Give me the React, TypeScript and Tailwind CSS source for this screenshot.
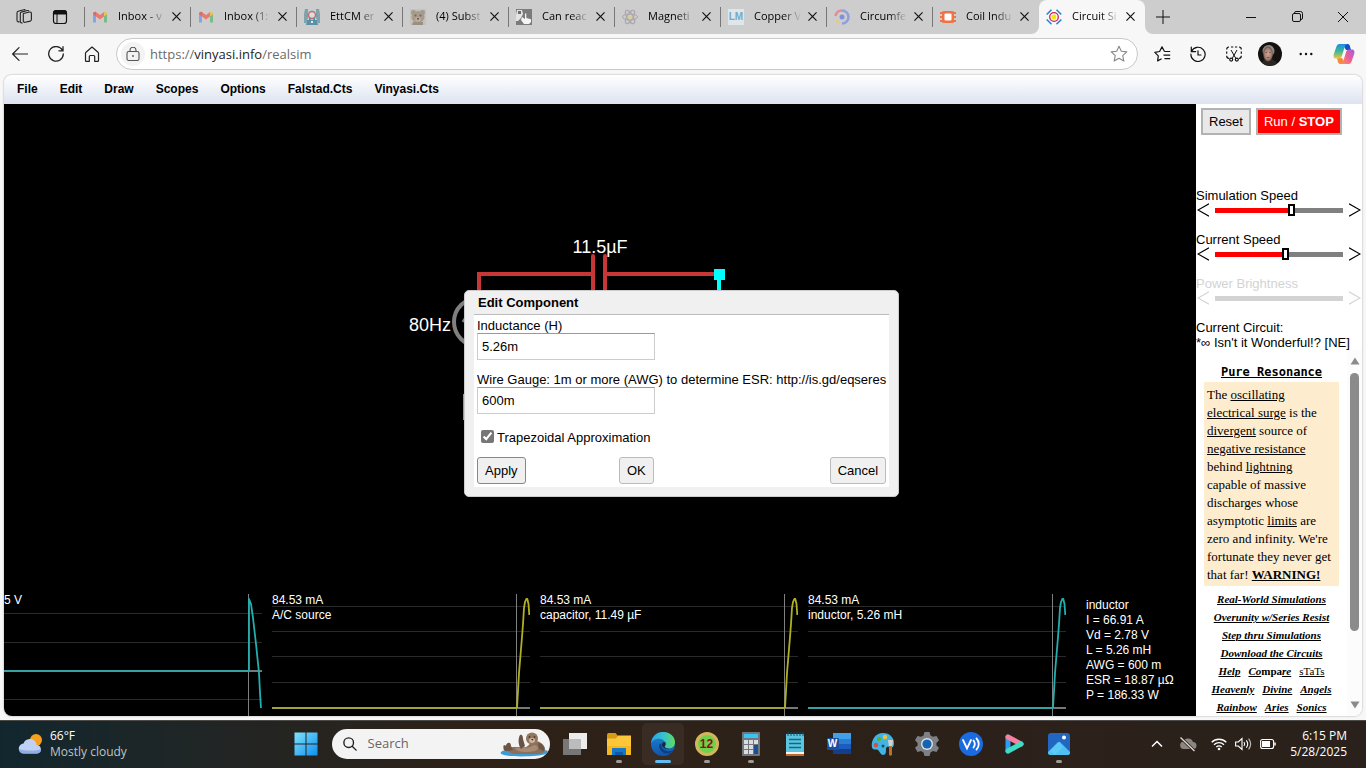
import { useState } from "react";
import type { ReactNode } from "react";
import clsx from "clsx";

/* ---------- favicons ---------- */

function Gmail() {
  return (
    <svg viewBox="0 0 16 16" className="size-4 opacity-60">
      <path d="M1 4.500V13.500h3V7z" fill="#4f8ff0" />
      <path d="M12 7v6.500h3v-9z" fill="#43b05c" />
      <path d="M1 5c0-2 1.800-2.800 3-1.900V7.600L1 5.300z" fill="#c8372e" />
      <path d="M4 3.100l4 3 4-3v4.500l-4 3-4-3z" fill="#ff4334" />
      <path d="M12 3.100c1.400-1 3 0 3 1.900v.3l-3 2.300z" fill="#fbbc04" />
    </svg>
  );
}

function Ett() {
  return (
    <svg viewBox="0 0 16 16" className="size-4">
      <path d="M0 0h16v16H0z" fill="#c3cfd2" />
      <path d="M1 0h3v9L2 14H0V5zM15 0h-3v9l2 5h2V5z" fill="#7fa3ad" />
      <path d="M3 11h10l1 5H2z" fill="#5e8fa2" />
      <circle cx="8" cy="6" r="3.500" fill="#d9dfe0" stroke="#c66b70" strokeWidth="1.500" />
      <path d="M5 8l3 4 3-4v6H5z" fill="#4f93ad" />
      <path d="M7 12h2v2H7z" fill="#e8edee" />
    </svg>
  );
}

function Bear() {
  return (
    <svg viewBox="0 0 16 16" className="size-4">
      <path d="M0 0h16v16H0z" fill="#c3c2bd" />
      <circle cx="3.500" cy="3.500" r="2.500" fill="#a39a8d" />
      <circle cx="12.500" cy="3.500" r="2.500" fill="#a39a8d" />
      <ellipse cx="8" cy="8" rx="6.500" ry="6" fill="#a79b8b" />
      <ellipse cx="8" cy="10.500" rx="3" ry="2.500" fill="#b9ad9e" />
      <path d="M3 13h10v3H2z" fill="#99907f" />
      <circle cx="5.500" cy="6.500" r="1" fill="#71675b" />
      <circle cx="10.500" cy="6.500" r="1" fill="#71675b" />
      <path d="M7 9h2v1.500H7z" fill="#665c52" />
    </svg>
  );
}

function HandPhoto() {
  return (
    <svg viewBox="0 0 16 16" className="size-4">
      <path d="M0 0h16v16H0z" fill="#7b7b7b" />
      <path d="M1 1l5 0 1 4-2 4-3 3H0V6z" fill="#e4e4e4" />
      <path d="M2 2h3v3H2z" fill="#6c6c6c" />
      <path d="M6 8l3 2V4.500h1.300V9l4.700 1.200V13l-2 2H8L5 11z" fill="#f5f5f5" />
    </svg>
  );
}

function Atom() {
  return (
    <svg viewBox="0 0 16 16" className="size-4" fill="none" stroke="#aaa4ad" strokeWidth="1">
      <ellipse cx="8" cy="8" rx="7.500" ry="3" />
      <ellipse cx="8" cy="8" rx="7.500" ry="3" transform="rotate(60 8 8)" />
      <ellipse cx="8" cy="8" rx="7.500" ry="3" transform="rotate(120 8 8)" />
      <circle cx="8" cy="8" r="2" fill="#d9cf8f" stroke="none" />
    </svg>
  );
}

function Lm() {
  return (
    <span className="flex size-4 items-center justify-center bg-[#dfe6ea] font-['Liberation_Sans'] text-[10px] font-bold text-[#76a9c8]">
      LM
    </span>
  );
}

function Rings() {
  return (
    <svg viewBox="0 0 16 16" className="size-4" fill="none" strokeWidth="2.600">
      <path d="M1.500 7A6.500 6.500 0 0 1 8 1.500" stroke="#e38b95" />
      <path d="M8 1.500a6.500 6.500 0 0 1 0 13" stroke="#8f9fe0" />
      <path d="M6 14.200a6.500 6.500 0 0 1-3.800-3.200" stroke="#e3cf7c" />
      <circle cx="8" cy="8" r="2.500" fill="#7f90de" stroke="none" />
    </svg>
  );
}

function Chip() {
  return (
    <svg viewBox="0 0 16 16" className="size-4">
      <path d="M0 3h3v2H0zM0 7h3v2H0zM0 11h3v2H0zM13 3h3v2h-3zM13 7h3v2h-3zM13 11h3v2h-3z" fill="#ef7443" />
      <rect x="2" y="2" width="12" height="12" rx="1.500" fill="#ef7443" />
      <rect x="4.500" y="4.500" width="7" height="7" rx="1" fill="#fff" />
    </svg>
  );
}

function Target() {
  return (
    <svg viewBox="0 0 16 16" className="size-4" fill="none">
      <circle cx="8" cy="8" r="4.300" stroke="#d6204e" strokeWidth="1.300" />
      <circle cx="8" cy="8" r="2.400" fill="#f3e600" />
      <path
        d="M5.500.7L.7 5.500M10.500.7l4.800 4.800M5.500 15.300L.7 10.500M10.500 15.300l4.800-4.800"
        stroke="#2a7fd0"
        strokeWidth="1.500"
      />
    </svg>
  );
}

interface TabInfo {
  title: string;
  icon: ReactNode;
}

const TABS: TabInfo[] = [
  { title: "Inbox - v", icon: <Gmail /> },
  { title: "Inbox (1:", icon: <Gmail /> },
  { title: "EttCM er", icon: <Ett /> },
  { title: "(4) Subst", icon: <Bear /> },
  { title: "Can reac", icon: <HandPhoto /> },
  { title: "Magneti", icon: <Atom /> },
  { title: "Copper V", icon: <Lm /> },
  { title: "Circumfe", icon: <Rings /> },
  { title: "Coil Indu", icon: <Chip /> },
  { title: "Circuit Si", icon: <Target /> },
];

function Cross() {
  return (
    <svg viewBox="0 0 10 10" className="size-[9px]" stroke="#111" strokeWidth="1.300">
      <path d="M.5.5l9 9M9.500.5l-9 9" />
    </svg>
  );
}

function Tab({ tab, active }: { tab: TabInfo; active: boolean }) {
  return (
    <div
      className={clsx(
        "relative flex h-full w-[106px] shrink-0 items-center pr-1 pb-px pl-[7px]",
        active && "rounded-t-lg bg-[#f7f7f7]",
      )}
    >
      {!active && <span className="absolute top-[7px] -left-px h-5 w-px bg-[#777]" />}
      {active && (
        <>
          <svg viewBox="0 0 8 8" className="absolute bottom-0 -left-2 size-2">
            <path d="M8 0v8H0a8 8 0 0 0 8-8z" fill="#f7f7f7" />
          </svg>
          <svg viewBox="0 0 8 8" className="absolute -right-2 bottom-0 size-2">
            <path d="M0 0v8h8a8 8 0 0 1-8-8z" fill="#f7f7f7" />
          </svg>
        </>
      )}
      {tab.icon}
      <span className="ml-[10px] w-12 text-[11px] whitespace-nowrap text-black [mask-image:linear-gradient(to_right,black_60%,transparent_98%)]">
        {tab.title}
      </span>
      <button aria-label="Close tab" className="ml-[2px] flex size-4 items-center justify-center">
        <Cross />
      </button>
    </div>
  );
}

function TabStrip() {
  return (
    <header className="flex h-[34px] shrink-0 items-center bg-[#cdcdcd] pb-px">
      <button aria-label="Workspaces" className="ml-[6px] flex w-9 justify-center">
        <svg viewBox="0 0 18 18" className="size-[18px]" fill="none" stroke="#222" strokeWidth="1.100">
          <path d="M8.500 5.500l6-1.500a1.500 1.500 0 0 1 1.900 1.400v6.200a1.500 1.500 0 0 1-1.200 1.500l-5 1.200a1.500 1.500 0 0 1-1.900-1.400V6.500a1 1 0 0 1 .2-1z" />
          <path d="M7.500 14.700a1.500 1.500 0 0 1-2.200-1.200V5.500c0-.7.400-1.200 1-1.400l6-1.600a1.500 1.500 0 0 1 1.700.8" />
          <path d="M4.500 13.500a1.500 1.500 0 0 1-2.500-1.100V5c0-.8.500-1.500 1.200-1.700l5.500-1.600a1.500 1.500 0 0 1 1.700.6" />
        </svg>
      </button>
      <button aria-label="Tab actions" className="mr-[7px] flex w-9 justify-center">
        <svg viewBox="0 0 16 16" className="size-4" fill="none" stroke="#111">
          <rect x="1.500" y="1.500" width="13" height="13" rx="2.500" strokeWidth="1.200" />
          <path d="M1.500 5V4a2.500 2.500 0 0 1 2.500-2.500h8A2.500 2.500 0 0 1 14.500 4v1z" fill="#111" />
          <path d="M5 5v9.500" />
        </svg>
      </button>
      <nav className="-mb-px flex h-[34px]" aria-label="Tabs">
        {TABS.map((tab, i) => (
          <Tab key={tab.title} tab={tab} active={i === TABS.length - 1} />
        ))}
      </nav>
      <button aria-label="New tab" className="ml-[10px] flex size-4 items-center justify-center">
        <svg viewBox="0 0 14 14" className="size-[14px]" stroke="#111">
          <path d="M7 0v14M0 7h14" />
        </svg>
      </button>
      <div className="ml-auto flex">
        <button aria-label="Minimize" className="flex w-[46px] items-center justify-center">
          <svg viewBox="0 0 10 10" className="size-[10px]" stroke="#111">
            <path d="M0 5.500h10" />
          </svg>
        </button>
        <button aria-label="Restore" className="flex w-[46px] items-center justify-center">
          <svg viewBox="0 0 11 11" className="size-[11px]" fill="none" stroke="#111">
            <rect x=".5" y="2.500" width="8" height="8" rx="1.500" />
            <path d="M2.500 2.500V2A1.500 1.500 0 0 1 4 .5h4.500a2 2 0 0 1 2 2V7A1.500 1.500 0 0 1 9 8.500h-.5" />
          </svg>
        </button>
        <button aria-label="Close" className="flex w-[46px] items-center justify-center">
          <svg viewBox="0 0 10 10" className="size-[10px]" stroke="#111">
            <path d="M0 0l10 10M10 0L0 10" />
          </svg>
        </button>
      </div>
    </header>
  );
}

/* ---------- address bar ---------- */

function ToolButton({ label, children }: { label: string; children: ReactNode }) {
  return (
    <button aria-label={label} className="flex h-8 w-9 shrink-0 items-center justify-center">
      {children}
    </button>
  );
}

function Toolbar() {
  return (
    <div className="flex h-[41px] shrink-0 items-center bg-[#f7f7f7] pr-1 pb-px pl-[2px]">
      <ToolButton label="Back">
        <svg viewBox="0 0 16 14" className="h-[14px] w-4" fill="none" stroke="#222" strokeWidth="1.200" strokeLinecap="round">
          <path d="M15.500 7H.8M7 .7L.7 7 7 13.300" />
        </svg>
      </ToolButton>
      <ToolButton label="Refresh">
        <svg viewBox="0 0 16 16" className="size-4" fill="none" stroke="#222" strokeWidth="1.300" strokeLinecap="round">
          <path d="M14.500 4.500A7.300 7.300 0 1 0 15.300 8M15 .7v4.100h-4.100" />
        </svg>
      </ToolButton>
      <ToolButton label="Home">
        <svg viewBox="0 0 16 16" className="size-4" fill="none" stroke="#222" strokeWidth="1.200" strokeLinejoin="round">
          <path d="M8 1l6 5.200c.4.300.5.700.5 1.100v7.200c0 .6-.3.900-.8.900h-3V10.500c0-.7-.4-1-1-1H6.300c-.6 0-1 .3-1 1v4.900h-3c-.5 0-.8-.3-.8-.9V7.300c0-.4.1-.8.500-1.100z" />
        </svg>
      </ToolButton>
      <div className="mx-[6px] flex h-8 min-w-0 flex-1 items-center rounded-full border border-[#c9c9c9] bg-white pr-[9px] pl-1">
        <button aria-label="Site information" className="flex size-6 items-center justify-center rounded-full bg-[#f3f3f3]">
          <svg viewBox="0 0 14 14" className="size-[14px]" fill="none" stroke="#555" strokeWidth="1.100">
            <rect x="1" y="4.500" width="12" height="9" rx="1.800" />
            <path d="M4 4.500V3.300a3 3 0 0 1 6 0v1.200" />
            <circle cx="7" cy="9" r=".9" fill="#555" stroke="none" />
          </svg>
        </button>
        <span className="ml-[5px] flex-1 pt-px text-[13px] text-[#6b6b6b]">
          https://<span className="text-[#222]">vinyasi.info</span>/realsim
        </span>
        <button aria-label="Add to favorites">
          <svg viewBox="0 0 18 18" className="size-[18px]" fill="none" stroke="#888" strokeWidth="1.100" strokeLinejoin="round">
            <path d="M9 1.300l2.300 5 5.500.6-4.100 3.700 1.200 5.500L9 13.300l-4.900 2.800 1.200-5.500L1.200 6.900l5.500-.6z" />
          </svg>
        </button>
      </div>
      <ToolButton label="Favorites">
        <svg viewBox="0 0 17 16" className="h-4 w-[17px]" fill="none" stroke="#111" strokeWidth="1.200" strokeLinejoin="round">
          <path d="M10.500 5.500L8 .9 5.600 5.500l-4.800.9 3.500 3.500-.7 5 4-2.100M10.500 5.500h5.700M9.500 9.200h6.700M10.500 12.700h5.700" />
        </svg>
      </ToolButton>
      <ToolButton label="History">
        <svg viewBox="0 0 16 16" className="size-4" fill="none" stroke="#111" strokeWidth="1.200" strokeLinecap="round">
          <path d="M1.500 5.500A7.100 7.100 0 1 1 .9 8M1.300 1.200v4.400h4.400M8 4.800V9h3" />
        </svg>
      </ToolButton>
      <ToolButton label="Screenshot">
        <svg viewBox="0 0 16 16" className="size-4" fill="none" stroke="#111" strokeWidth="1.200">
          <path d="M.7 3.500c0-1.500.8-2.500 2.300-2.500M5 1h2.300M9 1h2.200M13 1c1.500 0 2.300 1 2.300 2.500M.7 5.500v2.300M15.300 5.500v2.300M.7 9.700c0 1.800.8 2.600 2.300 2.600M15.300 9.700c0 1.800-.8 2.600-2.300 2.600" />
          <path d="M5 4l4.700 8.200M11 4L6.300 12.200" strokeWidth="1" />
          <circle cx="5.200" cy="13.600" r="1.500" />
          <circle cx="10.800" cy="13.600" r="1.500" />
        </svg>
      </ToolButton>
      <ToolButton label="Profile">
        <svg viewBox="0 0 24 24" className="size-6">
          <defs>
            <radialGradient id="face">
              <stop offset="0" stopColor="#d0a594" />
              <stop offset=".7" stopColor="#a58071" />
              <stop offset="1" stopColor="#5c4a45" />
            </radialGradient>
          </defs>
          <circle cx="12" cy="12" r="12" fill="#15110e" />
          <path d="M4 21c1-4 4-4 7-4s6 1 8 4a12 12 0 0 1-15 0z" fill="#2b2523" />
          <ellipse cx="10.500" cy="9" rx="6" ry="6" fill="#8f8782" />
          <ellipse cx="10" cy="12" rx="4.800" ry="7.500" fill="url(#face)" />
          <path d="M7.500 10.500h1.700M11.300 10.500H13M9 15.500h2.500" stroke="#6b4d42" strokeWidth=".8" />
        </svg>
      </ToolButton>
      <ToolButton label="Settings and more">
        <svg viewBox="0 0 14 4" className="h-1 w-[14px]" fill="#111">
          <circle cx="1.700" cy="2" r="1.200" />
          <circle cx="7" cy="2" r="1.200" />
          <circle cx="12.300" cy="2" r="1.200" />
        </svg>
      </ToolButton>
      <button aria-label="Copilot" className="ml-[2px] flex w-9 justify-center">
        <svg viewBox="0 0 22 22" className="size-[22px]">
          <defs>
            <linearGradient id="cpA" x1="0" y1="0" x2="0" y2="1">
              <stop offset="0" stopColor="#1b8fe8" />
              <stop offset=".5" stopColor="#3db795" />
              <stop offset="1" stopColor="#f0c63a" />
            </linearGradient>
            <linearGradient id="cpB" x1="1" y1="0" x2="0" y2="1">
              <stop offset="0" stopColor="#9b5fe8" />
              <stop offset=".5" stopColor="#ee5d96" />
              <stop offset="1" stopColor="#fb9a52" />
            </linearGradient>
          </defs>
          <path d="M9.500 1h5.200c1.800 0 2 1.500 2.600 3.500l.7 2.500h-5z" fill="#1950c8" />
          <path d="M12.500 21H7.300c-1.800 0-2.100-1.500-2.700-3.500L4 15h5z" fill="#f58a3c" />
          <path d="M13.500 1H6.500C4.500 1 3.700 2.500 3 4.700L1 10.500C0 13.500.7 15.500 3.300 15.500H6c1.800 0 2.400-1 2.900-2.500L11.500 4.500C12 2.500 12.500 1.500 14.500 1.300z" fill="url(#cpA)" />
          <path d="M8.500 21h7c2 0 2.800-1.500 3.500-3.700l2-5.800c1-3 .3-5-2.300-5H16c-1.800 0-2.400 1-2.900 2.500L10.500 17.500c-.5 2-1 3-3 3.200z" fill="url(#cpB)" />
        </svg>
      </button>
    </div>
  );
}

/* ---------- simulator ---------- */

const MENUS = ["File", "Edit", "Draw", "Scopes", "Options", "Falstad.Cts", "Vinyasi.Cts"];

function MenuBar() {
  return (
    <nav className="flex h-[29px] shrink-0 items-center bg-linear-to-b from-white to-[#dde3f0] pb-[2px] pl-[2px]">
      {MENUS.map((name) => (
        <button key={name} className="px-[11px] text-xs font-bold text-black">
          {name}
        </button>
      ))}
    </nav>
  );
}

interface ScopeProps {
  lines: string[];
  color: string;
  grid: number[];
  zero: number;
  trace: string;
}

function Scope({ lines, color, grid, zero, trace }: ScopeProps) {
  return (
    <div className="relative h-[122px] w-[258px] shrink-0">
      <svg viewBox="0 0 258 122" className="size-full" fill="none">
        {grid.map((y) => (
          <path key={y} d={`M0 ${y}.5h258`} stroke="#2a2a2a" />
        ))}
        <path d={`M0 ${zero}h258`} stroke="#777" strokeWidth="2" />
        <path d="M244.500 0v122" stroke="#808080" />
        <path d={`M0 ${zero}h245`} stroke={color} strokeWidth="1.500" />
        <path d={trace} stroke={color} strokeWidth="1.800" strokeLinejoin="round" />
      </svg>
      <div className="absolute top-0 left-0 -mt-px text-xs leading-[15px] text-white">
        {lines.map((l) => (
          <p key={l}>{l}</p>
        ))}
      </div>
    </div>
  );
}

const CURRENT_GRID = [12, 37, 62, 88];
const CURRENT_TRACE = "M245 114L246 97L247 79L248.500 61L250 43L251 30L252 14L253 8L254.300 5H255.300L256.500 10L257.300 21";

function Scopes() {
  const info = [
    "inductor",
    "I = 66.91 A",
    "Vd = 2.78 V",
    "L = 5.26 mH",
    "AWG = 600 m",
    "ESR = 18.87 µΩ",
    "P = 186.33 W",
  ];
  return (
    <div className="mt-auto flex gap-[10px]">
      <Scope lines={["5 V"]} color="#20b0b0" grid={[19, 48, 105]} zero={77} trace="M245 77V5l2 5 2 14 3 26 3 29 1 20 1 15" />
      <Scope lines={["84.53 mA", "A/C source"]} color="#b0b020" grid={CURRENT_GRID} zero={114} trace={CURRENT_TRACE} />
      <Scope lines={["84.53 mA", "capacitor, 11.49 µF"]} color="#b0b020" grid={CURRENT_GRID} zero={114} trace={CURRENT_TRACE} />
      <Scope lines={["84.53 mA", "inductor, 5.26 mH"]} color="#20b0b0" grid={CURRENT_GRID} zero={114} trace={CURRENT_TRACE} />
      <div className="pt-1 pl-[10px] text-xs leading-[15px] whitespace-nowrap text-white">
        {info.map((l) => (
          <p key={l}>{l}</p>
        ))}
      </div>
    </div>
  );
}

function Circuit() {
  return (
    <svg viewBox="0 0 360 200" className="mt-[126px] ml-[396px] h-[200px] w-[360px] shrink-0" fill="none" strokeWidth="4">
      <path d="M79 80V44h114M205 44h114" stroke="#c83737" strokeLinecap="round" />
      <path d="M193 26v50M205 26v50" stroke="#c83737" strokeLinecap="round" />
      <path d="M319 44v60" stroke="#00ffff" />
      <path d="M314 39h11v11h-11z" fill="#00ffff" />
      <circle cx="78" cy="92" r="24" stroke="#808080" />
      <path d="M63 92c4-8 10-8 15 0s11 8 15 0" stroke="#808080" strokeWidth="3" />
      <path d="M63.500 164v26" stroke="#999" strokeWidth="1" />
      <text x="200" y="23" fill="#fff" textAnchor="middle" fontSize="18">
        11.5µF
      </text>
      <text x="51" y="101" fill="#fff" textAnchor="end" fontSize="18">
        80Hz
      </text>
    </svg>
  );
}

function EditDialog() {
  const [trapezoidal, setTrapezoidal] = useState(true);
  const field = "block h-[27px] w-[178px] border border-[#ccc] border-t-[#999] bg-white px-1 text-[13px] outline-none";
  const button = "h-[27px] rounded-[3px] border bg-[#f0f0f0] px-[7px] text-[13px]";

  return (
    <div
      role="dialog"
      aria-labelledby="edit-title"
      className="absolute top-[215px] left-[460px] rounded-[5px] border border-[#ccc] bg-[#f0f0f0] px-[9px] pb-[9px] text-[13px] leading-[15px] text-black"
    >
      <h2 id="edit-title" className="flex h-[23px] items-center pl-1 text-[13px] font-bold">
        Edit Component
      </h2>
      <div className="border-t border-[#bbb] bg-white px-[3px] pt-[3px] pb-[3px]">
        <label htmlFor="inductance">Inductance (H)</label>
        <input id="inductance" className={field} defaultValue="5.26m" />
        <label htmlFor="gauge" className="mt-3 block whitespace-nowrap">
          Wire Gauge: 1m or more (AWG) to determine ESR: http://is.gd/eqseres
        </label>
        <input id="gauge" className={field} defaultValue="600m" />
        <label className="mt-4 flex items-start gap-[3px] pl-1">
          <input
            type="checkbox"
            className="size-[13px] accent-[#767676]"
            checked={trapezoidal}
            onChange={(e) => setTrapezoidal(e.target.checked)}
          />
          Trapezoidal Approximation
        </label>
        <div className="mt-3 grid grid-cols-[142px_1fr_auto]">
          <div>
            <button className={clsx(button, "border-[#888]")}>Apply</button>
          </div>
          <div>
            <button className={clsx(button, "border-[#bbb]")}>OK</button>
          </div>
          <button className={clsx(button, "border-[#bbb]")}>Cancel</button>
        </div>
      </div>
    </div>
  );
}

function Slider({ label, initial, disabled }: { label: string; initial: number; disabled?: boolean }) {
  const [value, setValue] = useState(initial);
  const id = label.toLowerCase().replace(" ", "-");
  const fill = disabled ? "#d3d3d3" : `linear-gradient(to right, red ${value}%, #808080 ${value}%)`;

  return (
    <div className={clsx("h-11", disabled ? "text-[#d3d3d3]" : "text-black")}>
      <label htmlFor={id} className="block">
        {label}
      </label>
      <div className="flex h-[14px] items-center justify-between px-px">
        <button aria-label={`Decrease ${label}`} disabled={disabled}>
          <svg viewBox="0 0 12 14" className="h-[14px] w-3" fill="none" stroke="currentColor" strokeWidth="1.200">
            <path d="M12 .7L1 7l11 6.300" />
          </svg>
        </button>
        <input
          id={id}
          type="range"
          value={value}
          disabled={disabled}
          onChange={(e) => setValue(Number(e.target.value))}
          style={{ background: fill }}
          className={clsx(
            "h-[5px] w-32 appearance-none [&::-webkit-slider-thumb]:h-3 [&::-webkit-slider-thumb]:w-[7px] [&::-webkit-slider-thumb]:appearance-none [&::-webkit-slider-thumb]:border-2 [&::-webkit-slider-thumb]:border-black [&::-webkit-slider-thumb]:bg-white",
            disabled && "[&::-webkit-slider-thumb]:opacity-0",
          )}
        />
        <button aria-label={`Increase ${label}`} disabled={disabled}>
          <svg viewBox="0 0 12 14" className="h-[14px] w-3" fill="none" stroke="currentColor" strokeWidth="1.200">
            <path d="M0 .7L11 7 0 13.300" />
          </svg>
        </button>
      </div>
    </div>
  );
}

function U({ children }: { children: ReactNode }) {
  return (
    <a href="#" className="underline">
      {children}
    </a>
  );
}

function Notes() {
  return (
    <div className="flex min-h-0 flex-1 overflow-hidden">
      <div className="min-w-0 flex-1 pt-3 pr-2 pl-2">
        <h3 className="text-center font-['DejaVu_Sans_Mono',monospace] text-xs leading-5 font-bold">
          <U>Pure Resonance</U>
        </h3>
        <p className="bg-[#feeccf] px-[3px] pt-1 pb-[2px] font-['Liberation_Serif',serif] text-[13px] leading-[18px] whitespace-nowrap">
          The <U>oscillating</U>
          <br />
          <U>electrical surge</U> is the
          <br />
          <U>divergent</U> source of
          <br />
          <U>negative resistance</U>
          <br />
          behind <U>lightning</U>
          <br />
          capable of massive
          <br />
          discharges whose
          <br />
          asymptotic <U>limits</U> are
          <br />
          zero and infinity. We're
          <br />
          fortunate they never get
          <br />
          that far!{" "}
          <b>
            <U>WARNING!</U>
          </b>
        </p>
        <div className="pt-1 text-center font-['Liberation_Serif',serif] text-[11px] leading-[18px] font-bold whitespace-nowrap italic">
          <p><U>Real-World Simulations</U></p>
          <p><U>Overunity w/Series Resist</U></p>
          <p><U>Step thru Simulations</U></p>
          <p><U>Download the Circuits</U></p>
          <p className="flex justify-center gap-2">
            <U>Help</U>
            <a href="#">
              <span className="underline">Co</span>
              <span className="not-italic">mpa</span>
              <span className="underline">re</span>
            </a>
            <span className="font-normal not-italic"><U>sTaTs</U></span>
          </p>
          <p className="flex justify-center gap-2"><U>Heavenly</U><U>Divine</U><U>Angels</U></p>
          <p className="flex justify-center gap-2"><U>Rainbow</U><U>Aries</U><U>Sonics</U></p>
        </div>
      </div>
      <div className="flex w-[15px] shrink-0 flex-col items-center bg-[#fcfcfc] pt-[7px] pb-[7px]" aria-hidden="true">
        <svg viewBox="0 0 10 8" className="h-2 w-[10px]" fill="#8b8b8b">
          <path d="M5 0.500L9.500 7.500h-9z" />
        </svg>
        <div className="mt-2 h-[258px] w-[9px] rounded-full bg-[#8b8b8b]" />
        <svg viewBox="0 0 10 8" className="mt-auto h-2 w-[10px]" fill="#8b8b8b">
          <path d="M5 7.500L9.500.5h-9z" />
        </svg>
      </div>
    </div>
  );
}

function SidePanel() {
  return (
    <aside className="flex w-[166px] shrink-0 flex-col bg-white text-[13px] leading-[15px] text-black">
      <div className="flex gap-[5px] pt-1 pl-[5px]">
        <button className="h-[27px] border-2 border-[#b2b2b2] bg-[#e9e9e9] px-[6px]">Reset</button>
        <button className="h-[27px] border-2 border-[#b2b2b2] bg-[#ff0000] px-[6px] text-white">
          Run / <b>STOP</b>
        </button>
      </div>
      <div className="mt-[53px]">
        <Slider label="Simulation Speed" initial={60} />
        <Slider label="Current Speed" initial={55} />
        <Slider label="Power Brightness" initial={50} disabled />
      </div>
      <p className="whitespace-nowrap">
        Current Circuit:
        <br />
        *∞ Isn't it Wonderful!? [NE]
      </p>
      <Notes />
    </aside>
  );
}

/* ---------- taskbar ---------- */

function Otter() {
  return (
    <svg viewBox="0 0 50 26" className="h-[26px] w-[50px]">
      <path d="M1 21c4-3 10-2 15-2h28c5 0 5 3 2 4-8 3-36 3-42 1-2-1-4-1-3-3z" fill="#3a9bd6" />
      <path d="M8 17c6-2 13 0 18-1 3-1 4-5 8-6 6-1 12 5 11 9-1 4-7 4-13 4H16c-6 0-10-3-8-6z" fill="#8a6f5b" />
      <path d="M15 17c6-1 12 1 17-2 3-2 5-1 6 2 0 3-6 4-12 4-5 0-10-1-11-4z" fill="#a88a72" />
      <path d="M20 4c2-1 3 1 3 4l2 7-4 3c-3-4-3-11-1-14z" fill="#6b5244" />
      <circle cx="32" cy="7.500" r="6" fill="#94765f" />
      <ellipse cx="32" cy="9.500" rx="3" ry="2.400" fill="#cdb49c" />
      <circle cx="29.500" cy="6" r=".8" fill="#222" />
      <circle cx="34.500" cy="6" r=".8" fill="#222" />
      <path d="M31 8h2.500l-1.200 1.400z" fill="#222" />
      <path d="M8 12c2-1 3 1 3 3l2 4-5 1c-3-2-3-7 0-8zM4 14c2 0 3 3 4 6H5c-2-1-2-5-1-6z" fill="#6e5443" />
      <path d="M38 12c4 0 7 4 6 8l-5-2z" fill="#6e5443" />
    </svg>
  );
}

interface AppInfo {
  name: string;
  running?: boolean;
  active?: boolean;
  icon: ReactNode;
}

const APPS: AppInfo[] = [
  {
    name: "Task View",
    icon: (
      <svg viewBox="0 0 24 24" className="size-6">
        <path d="M6 1h18v16H6z" fill="#ececec" />
        <path d="M0 7h18v16H0z" fill="#777" />
        <path d="M6 7h12v10H6z" fill="#bcbcbc" />
      </svg>
    ),
  },
  {
    name: "File Explorer",
    running: true,
    icon: (
      <svg viewBox="0 0 24 24" className="size-6">
        <path d="M0 3c0-1 .5-2 1.500-2h7L11 4v4H0z" fill="#d79a14" />
        <path d="M0 6.500h9L11 3.500h13V22c0 .5-.5 1-1 1H1c-.500 0-1-.5-1-1z" fill="#fcc63a" />
        <path d="M0 14h24v8c0 .5-.5 1-1 1H1c-.5 0-1-.5-1-1z" fill="#f6b81f" />
        <path d="M5 23v-6c0-.6.4-1 1-1h12c.6 0 1 .4 1 1v6z" fill="#1478c8" />
        <path d="M8 20h8v3H8z" fill="#0c5aa0" />
      </svg>
    ),
  },
  {
    name: "Microsoft Edge",
    active: true,
    icon: (
      <svg viewBox="0 0 24 24" className="size-6">
        <defs>
          <linearGradient id="edgeTop" x1="0" y1="0" x2="1" y2="0">
            <stop offset="0" stopColor="#2aa3e6" />
            <stop offset=".5" stopColor="#34c1cf" />
            <stop offset="1" stopColor="#5fdc5d" />
          </linearGradient>
          <linearGradient id="edgeLow" x1="0" y1="0" x2="0" y2="1">
            <stop offset="0" stopColor="#1c86d8" />
            <stop offset="1" stopColor="#1254a8" />
          </linearGradient>
        </defs>
        <circle cx="12" cy="12" r="12" fill="url(#edgeLow)" />
        <path d="M0 11.500C.6 4.800 5.700 0 12 0c7 0 12 4.800 12 10.300 0 3.800-2.900 6.200-6.200 6.200-2.800 0-4.500-1-4-2 .9-1.300 1-2 .8-3C14 9 11.500 6.800 8 6.800c-3.500 0-7 2-8 4.700z" fill="url(#edgeTop)" />
        <path d="M8.200 13c-.5 4.500 3 9.300 9 8.500 2.300-.5 4-1.700 5-3.200-2 .9-4 1.200-6.400.7-4-.8-6-4-5.200-7.400-1.300.1-2.200.6-2.400 1.400z" fill="#0c3f86" />
        <path d="M14.500 10.500c.5 1.700-.2 3-1 4 .3 1 2 2 4.500 2-2.500.9-7-.4-7-4 0-1.500 2-3.500 3.500-2z" fill="#1d2a33" />
      </svg>
    ),
  },
  {
    name: "Twelve",
    running: true,
    icon: (
      <span className="flex size-6 items-center justify-center rounded-full border-[3px] border-[#d3b55c] bg-[#6fd04a] font-['Liberation_Sans'] text-xs font-bold text-[#8e0f0f]">
        12
      </span>
    ),
  },
  {
    name: "Calculator",
    running: true,
    icon: (
      <svg viewBox="0 0 24 24" className="size-6">
        <rect x="3" width="18" height="24" rx="1" fill="#71777d" />
        <path d="M5 2h14v4H5z" fill="#38c5f4" />
        <path d="M5 8h4v4H5zM10 8h4v4h-4zM15 8h4v4h-4zM5 13h4v4H5zM10 13h4v4h-4zM5 18h4v4H5zM10 18h4v4h-4z" fill="#dadcde" />
        <path d="M15 13h4v9h-4z" fill="#184f96" />
      </svg>
    ),
  },
  {
    name: "Notepad",
    icon: (
      <svg viewBox="0 0 24 24" className="size-6">
        <path d="M3 2h18v20H3z" fill="#5bc5e0" />
        <path d="M3 20h18v2H3z" fill="#f4f4f4" />
        <path d="M3 22h18v2H3z" fill="#c4692a" />
        <path d="M5 0v4M8 0v4M11 0v4M14 0v4M17 0v4M20 0v4" stroke="#184f66" />
        <path d="M6 7.500h12M6 11.500h12M6 15.500h12" stroke="#13697f" strokeWidth="1.500" />
      </svg>
    ),
  },
  {
    name: "Word",
    icon: (
      <span className="relative block size-6">
        <svg viewBox="0 0 24 24" className="size-6">
          <path d="M6 1h18v6H6z" fill="#41a0ea" />
          <path d="M6 7h18v5H6z" fill="#2b7cd3" />
          <path d="M6 12h18v5H6z" fill="#1b5dbe" />
          <path d="M6 17h18v5H6z" fill="#123e8c" />
          <rect y="6" width="12" height="12" rx="1" fill="#1a4fa0" />
        </svg>
        <span className="absolute top-[6px] left-0 w-3 text-center font-['Liberation_Sans'] text-[10px] leading-3 font-bold text-white">W</span>
      </span>
    ),
  },
  {
    name: "Paint",
    icon: (
      <svg viewBox="0 0 24 24" className="size-6">
        <path d="M12 1c7 0 11 5 11 10 0 3-1 5-3 4-2-1-5-1-5 2s0 6-3 6c-2 0-3-3-5-5-1-1-3 0-5-1-3-2-1-16 10-16z" fill="#41b4e6" />
        <circle cx="5" cy="13" r="2.200" fill="#e04a3a" />
        <circle cx="8" cy="7" r="2.200" fill="#5fae3a" />
        <circle cx="14" cy="5" r="2.200" fill="#f2c52e" />
        <circle cx="12" cy="14" r="1.500" fill="#1b4d68" />
        <path d="M17 8h5l-1 8h-3z" fill="#d9d2c6" />
        <path d="M18 14h3v9c-1 1-2 1-3 0z" fill="#b5722b" />
      </svg>
    ),
  },
  {
    name: "Settings",
    icon: (
      <svg viewBox="0 0 24 24" className="size-6">
        <path d="M9.500 0h5l1 3.500 2.500 1.300L21.500 4 24 8.200 21.400 11v2.500l2.600 2.300-2.500 4.300-3.500-1-2.500 1.400-1 3.500h-5l-1-3.500L6 19.100l-3.500 1L0 15.800l2.600-2.300V11L0 8.200 2.500 4l3.500.8 2.500-1.300z" fill="#7d8186" />
        <circle cx="12" cy="12" r="6" fill="#dfe1e3" />
        <circle cx="12" cy="12" r="4.600" fill="#1464b4" />
      </svg>
    ),
  },
  {
    name: "Voice",
    icon: (
      <svg viewBox="0 0 24 24" className="size-6" fill="none" stroke="#fff" strokeWidth="1.800" strokeLinecap="round">
        <circle cx="12" cy="12" r="12" fill="#1b6be0" stroke="none" />
        <path d="M4 8l4 8.500L12 8M14.500 8.500c1.500 2 1.500 5 0 7M17.500 6.500c3 3 3 8 0 11" />
      </svg>
    ),
  },
  {
    name: "Media",
    icon: (
      <svg viewBox="0 0 24 24" className="size-6" fill="none" strokeWidth="5" strokeLinejoin="round" strokeLinecap="round">
        <path d="M5 5v14" stroke="#2d9df0" />
        <path d="M5 5l13 7" stroke="#f77fa0" />
        <path d="M18 12L5 19" stroke="#3fdcc4" />
      </svg>
    ),
  },
  {
    name: "Photos",
    running: true,
    icon: (
      <svg viewBox="0 0 24 24" className="size-6">
        <rect x="1" y="1" width="22" height="22" rx="3" fill="#2167c2" />
        <path d="M1 20L10.500 10.500c1-1 2-1 3 0L23 20v1c0 1-1 2-2 2H3c-1 0-2-1-2-2z" fill="#4cc1f2" />
        <path d="M8 23l-5-4 9-9 4 5z" fill="#76d6f8" opacity=".4" />
        <circle cx="17" cy="5.500" r="2" fill="#fff" />
      </svg>
    ),
  },
];

function Taskbar() {
  return (
    <footer className="grid h-12 shrink-0 grid-cols-[1fr_auto_1fr] items-center border-t border-[#4c4a47] bg-linear-to-r from-[#11272e] via-[#2e2117] via-35% to-[#2a211c] pb-[2px] text-white">
      <button className="flex items-center gap-[6px] pl-[18px] text-left">
        <svg viewBox="0 0 26 24" className="h-6 w-[26px]">
          <circle cx="18" cy="8" r="6" fill="#f6a01e" />
          <path d="M6 21.500a5 5 0 0 1-.5-10A7 7 0 0 1 18 10.500c.5 1 .5 2 .5 2.500a4.300 4.300 0 0 1 1 8.500z" fill="#c0d2f3" />
          <path d="M6 21.500a5 5 0 0 1-5-4.500c5 2 18 2 22 0a4.300 4.300 0 0 1-4 4.500z" fill="#8eaee6" />
        </svg>
        <span className="text-xs leading-4">
          66°F
          <br />
          <span className="text-[#bcc4c6]">Mostly cloudy</span>
        </span>
      </button>
      <div className="flex items-center pr-[2px]">
        <button aria-label="Start" className="flex size-10 items-center justify-center">
          <svg viewBox="0 0 24 24" className="size-6">
            <defs>
              <linearGradient id="win" x1="0" y1="0" x2="1" y2="1">
                <stop offset="0" stopColor="#7fe4fb" />
                <stop offset="1" stopColor="#0f8df0" />
              </linearGradient>
            </defs>
            <path d="M.5.5h11v11H.5zM12.500.5h11v11h-11zM.5 12.500h11v11H.5zM12.500 12.500h11v11h-11z" fill="url(#win)" />
          </svg>
        </button>
        <label className="mr-[5px] ml-[6px] flex h-[30px] w-[218px] items-center overflow-hidden rounded-full bg-[#f3f3f3] pl-[11px]">
          <svg viewBox="0 0 16 16" className="size-[14px] shrink-0" fill="none" stroke="#222" strokeWidth="1.600" strokeLinecap="round">
            <circle cx="6.500" cy="6.500" r="5.500" />
            <path d="M10.500 10.500l4.500 4.500" />
          </svg>
          <input aria-label="Search" placeholder="Search" className="ml-[11px] min-w-0 flex-1 text-[13px] text-black outline-none placeholder:text-[#666]" />
          <Otter />
        </label>
        <div className="flex gap-1">
          {APPS.map((app) => (
            <button
              key={app.name}
              aria-label={app.name}
              className={clsx(
                "relative flex size-10 items-center justify-center rounded",
                app.active && "bg-white/5 ring-1 ring-white/5",
              )}
            >
              {app.icon}
              {app.running && <span className="absolute bottom-[1px] h-[3px] w-[6px] rounded-full bg-[#a09a94]" />}
              {app.active && <span className="absolute bottom-[1px] h-[3px] w-4 rounded-full bg-[#5fbdf0]" />}
            </button>
          ))}
        </div>
      </div>
      <div className="flex items-center justify-end pr-[19px]">
        <button aria-label="Hidden icons" className="mr-4">
          <svg viewBox="0 0 12 8" className="h-2 w-3" fill="none" stroke="#fff" strokeWidth="1.500">
            <path d="M1 6.500l5-5 5 5" />
          </svg>
        </button>
        <svg viewBox="0 0 18 16" className="mr-[14px] h-4 w-[18px]">
          <path d="M4.500 13a3.800 3.800 0 0 1-.3-7.500A5.300 5.300 0 0 1 14 6a3.500 3.500 0 0 1 0 7z" fill="#8b8680" />
          <path d="M1.500 1.500l14 13.500" stroke="#2e2117" strokeWidth="3" />
          <path d="M1.500 1.500l14 13.500" stroke="#ddd" strokeWidth="1.300" />
        </svg>
        <button aria-label="Network, volume and battery" className="flex items-center gap-2">
          <svg viewBox="0 0 16 14" className="h-[14px] w-4" fill="none" stroke="#fff" strokeWidth="1.300">
            <path d="M.7 5.200a10.500 10.500 0 0 1 14.600 0M3 7.700a7.200 7.200 0 0 1 10 0M5.300 10.100a4 4 0 0 1 5.400 0" />
            <circle cx="8" cy="12" r="1.300" fill="#fff" stroke="none" />
          </svg>
          <svg viewBox="0 0 17 14" className="h-[14px] w-[17px]" fill="none" stroke="#fff" strokeWidth="1.100">
            <path d="M.6 5h2.700L7 1.500v11L3.300 9H.6zM9 5c.8 1.200.8 2.800 0 4M11.300 3.300c1.700 2.200 1.700 5.200 0 7.400" />
            <path d="M13.600 1.700c2.500 3.200 2.500 7.400 0 10.600" opacity=".7" />
          </svg>
          <svg viewBox="0 0 16 12" className="h-3 w-4" fill="none" stroke="#fff" strokeWidth="1.100">
            <rect x=".6" y="1.500" width="13" height="9" rx="2" />
            <path d="M2.500 3.500h7v5h-7z" fill="#fff" />
            <path d="M15 4.500v3" strokeWidth="1.500" />
          </svg>
        </button>
        <time className="ml-[14px] text-right text-xs leading-4">
          6:15 PM
          <br />
          5/28/2025
        </time>
      </div>
    </footer>
  );
}

export default function App() {
  return (
    <div className="flex h-screen flex-col overflow-hidden bg-[#f7f7f7] font-['Open_Sans',sans-serif]">
      <TabStrip />
      <Toolbar />
      <main className="relative mx-1 mb-1 flex min-h-0 flex-1 flex-col overflow-hidden rounded-lg font-['Liberation_Sans',Arial,sans-serif] shadow-[0_0_2px_#999]">
        <MenuBar />
        <div className="flex min-h-0 flex-1">
          <section className="flex min-w-0 flex-1 flex-col overflow-hidden bg-black">
            <Circuit />
            <Scopes />
          </section>
          <SidePanel />
        </div>
        <EditDialog />
      </main>
      <Taskbar />
    </div>
  );
}
